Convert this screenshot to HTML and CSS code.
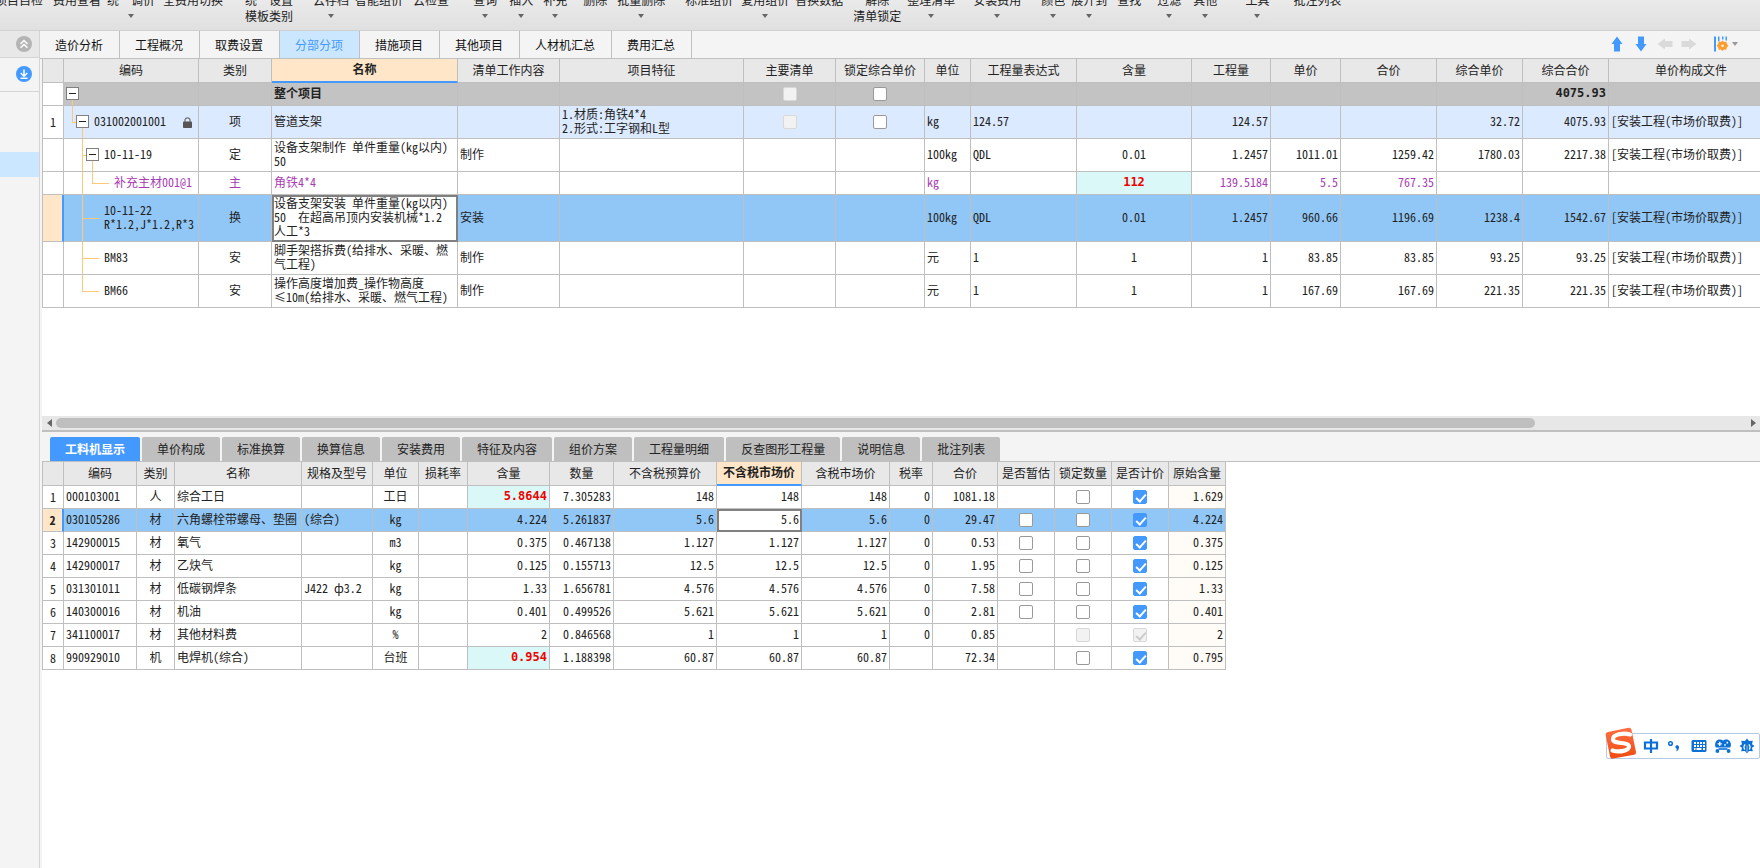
FILE: index.html
```html
<!DOCTYPE html>
<html lang="zh-CN">
<head>
<meta charset="utf-8">
<title>分部分项</title>
<link rel="stylesheet" href="styles.css">
</head>
<body>
<header class="ribbon">
  <button class="tool first">项目自检</button>
  <button class="tool g10">费用查看</button>
  <button class="tool g6">统一调价<i class="caret"></i></button>
  <button class="tool g8">全费用切换</button>
  <button class="tool g22">统一设置<span>模板类别</span></button>
  <button class="tool g20">云存档<i class="caret"></i></button>
  <button class="tool g6">智能组价</button>
  <button class="tool g10">云检查</button>
  <button class="tool g24">查询<i class="caret"></i></button>
  <button class="tool g12">插入<i class="caret"></i></button>
  <button class="tool g10">补充<i class="caret"></i></button>
  <button class="tool g16">删除</button>
  <button class="tool g10">批量删除<i class="caret"></i></button>
  <button class="tool g20">标准组价</button>
  <button class="tool g8">复用组价<i class="caret"></i></button>
  <button class="tool g6">替换数据</button>
  <button class="tool g10">解除<span>清单锁定</span></button>
  <button class="tool g6">整理清单<i class="caret"></i></button>
  <button class="tool g18">安装费用<i class="caret"></i></button>
  <button class="tool g20">颜色<i class="caret"></i></button>
  <button class="tool g6">展开到<i class="caret"></i></button>
  <button class="tool g10">查找</button>
  <button class="tool g16">过滤<i class="caret"></i></button>
  <button class="tool g12">其他<i class="caret"></i></button>
  <button class="tool g28">工具<i class="caret"></i></button>
  <button class="tool g24">批注列表</button>
</header>

<div class="workspace">
  <aside class="sidebar">
    <button class="side-top" aria-label="收起">
      <svg width="16" height="16" viewBox="0 0 16 16"><circle cx="8" cy="8" r="8" fill="#b4b4b4"/><path d="M4.5 8 8 4.6 11.5 8M4.5 11.8 8 8.4l3.5 3.4" fill="none" stroke="#fff" stroke-width="1.4"/></svg>
    </button>
    <button class="side-down" aria-label="下载">
      <svg width="16" height="16" viewBox="0 0 16 16"><circle cx="8" cy="8" r="8" fill="#4499ff"/><path d="M8 3.5v6M4.8 7 8 10.2 11.2 7M4.5 12.2h7" fill="none" stroke="#fff" stroke-width="1.5"/></svg>
    </button>
    <div class="side-selected"></div>
  </aside>

  <main class="main">
    <nav class="tabs">
      <button class="tab">造价分析</button>
      <button class="tab">工程概况</button>
      <button class="tab">取费设置</button>
      <button class="tab active">分部分项</button>
      <button class="tab">措施项目</button>
      <button class="tab">其他项目</button>
      <button class="tab">人材机汇总</button>
      <button class="tab">费用汇总</button>
      <div class="tab-tools">
        <button aria-label="上移"><svg width="16" height="16" viewBox="0 0 16 16"><path d="M8 .5 13.500 8H11v7.500H5V8H2.500z" fill="#4499ff"/></svg></button>
        <button aria-label="下移"><svg width="16" height="16" viewBox="0 0 16 16"><path d="M8 15.500 13.500 8H11V.5H5V8H2.500z" fill="#4499ff"/></svg></button>
        <button aria-label="左移"><svg width="16" height="16" viewBox="0 0 16 16"><path d="M.5 8 8 2.500V5h7.500v6H8v2.500z" fill="#dadada"/></svg></button>
        <button aria-label="右移"><svg width="16" height="16" viewBox="0 0 16 16"><path d="M15.500 8 8 2.500V5H.5v6H8v2.500z" fill="#dadada"/></svg></button>
        <button class="config" aria-label="列设置"><svg width="16" height="16" viewBox="0 0 16 16"><path d="M1 .5h2v15H1zM5 .5h1.500v5H5zM9 .5h1.500v3H9zM12.500.5H14v4h-1.500z" fill="#4499ff"/><path d="M9.500 4.500l1.600 1.400 2.200-.2.500 2.100 1.500 1.900-1.500 1.900-.5 2.100-2.200-.2-1.600 1.400-1.600-1.400-2.200.2-.5-2.100-1.500-1.900 1.500-1.900.5-2.100 2.200.2z" fill="#ff9d2b"/><circle cx="9.500" cy="9.700" r="1.300" fill="#f4f4f4"/></svg><i class="caret"></i></button>
      </div>
    </nav>

    <section class="upper">
      <table class="grid bill">
        <colgroup><col class="w21"><col class="w135"><col class="w73"><col class="w186"><col class="w102"><col class="w184"><col class="w92"><col class="w89"><col class="w46"><col class="w106"><col class="w115"><col class="w79"><col class="w70"><col class="w96"><col class="w86"><col class="w86"><col></colgroup>
        <thead><tr><th></th><th>编码</th><th>类别</th><th class="sorted">名称</th><th>清单工作内容</th><th>项目特征</th><th>主要清单</th><th>锁定综合单价</th><th>单位</th><th>工程量表达式</th><th>含量</th><th>工程量</th><th>单价</th><th>合价</th><th>综合单价</th><th>综合合价</th><th>单价构成文件</th></tr></thead>
        <tbody>
          <tr class="short total">
            <td class="num"></td>
            <td class="code"><button class="fold l0" aria-label="折叠"></button><i class="v l0 from"></i></td>
            <td></td><td class="strong">整个项目</td><td></td><td></td>
            <td class="check"><input type="checkbox" disabled aria-label="主要清单"></td>
            <td class="check"><input type="checkbox" aria-label="锁定综合单价"></td>
            <td></td><td></td><td></td><td></td><td></td><td></td><td></td><td class="r boldnum">4075.93</td><td></td>
          </tr>
          <tr class="tall item">
            <td class="num">1</td>
            <td class="code in1"><i class="v l0 to"></i><i class="h l0 tiny"></i><button class="fold l1" aria-label="折叠"></button><i class="v l1 from"></i>031002001001<svg class="lock" width="9" height="11" viewBox="0 0 9 11"><path d="M2 5V3.300a2.500 2.500 0 0 1 5 0V5" fill="none" stroke="#777" stroke-width="1.300"/><rect y="4.500" width="9" height="6.500" rx=".8" fill="#555"/></svg></td>
            <td class="c">项</td><td>管道支架</td><td></td><td>1.材质:角铁4*4<br>2.形式:工字钢和L型</td>
            <td class="check"><input type="checkbox" disabled aria-label="主要清单"></td>
            <td class="check"><input type="checkbox" aria-label="锁定综合单价"></td>
            <td>kg</td><td>124.57</td><td></td><td class="r">124.57</td><td></td><td></td><td class="r">32.72</td><td class="r">4075.93</td><td>[安装工程(市场价取费)]</td>
          </tr>
          <tr class="tall">
            <td class="num"></td>
            <td class="code in2"><i class="v l1"></i><i class="h l1 tiny"></i><button class="fold l2" aria-label="折叠"></button><i class="v l2 from"></i>10-11-19</td>
            <td class="c">定</td><td>设备支架制作 单件重量(kg以内)<br>50</td><td>制作</td><td></td><td></td><td></td>
            <td>100kg</td><td>QDL</td><td class="c">0.01</td><td class="r">1.2457</td><td class="r">1011.01</td><td class="r">1259.42</td><td class="r">1780.03</td><td class="r">2217.38</td><td>[安装工程(市场价取费)]</td>
          </tr>
          <tr class="short material">
            <td class="num"></td>
            <td class="code in3"><i class="v l1"></i><i class="v l2 to"></i><i class="h l2"></i>补充主材001@1</td>
            <td class="c">主</td><td>角铁4*4</td><td></td><td></td><td></td><td></td>
            <td>kg</td><td></td><td class="c boldnum changed">112</td><td class="r">139.5184</td><td class="r">5.5</td><td class="r">767.35</td><td></td><td></td><td></td>
          </tr>
          <tr class="triple selected">
            <td class="num"></td>
            <td class="code in2"><i class="v l1"></i><i class="h l1"></i>10-11-22<br>R*1.2,J*1.2,R*3</td>
            <td class="c">换</td><td class="focus">设备支架安装 单件重量(kg以内)<br>50&nbsp; 在超高吊顶内安装机械*1.2<br>人工*3</td><td>安装</td><td></td><td></td><td></td>
            <td>100kg</td><td>QDL</td><td class="c">0.01</td><td class="r">1.2457</td><td class="r">960.66</td><td class="r">1196.69</td><td class="r">1238.4</td><td class="r">1542.67</td><td>[安装工程(市场价取费)]</td>
          </tr>
          <tr class="tall">
            <td class="num"></td>
            <td class="code in2"><i class="v l1"></i><i class="h l1"></i>BM83</td>
            <td class="c">安</td><td>脚手架搭拆费(给排水、采暖、燃<br>气工程)</td><td>制作</td><td></td><td></td><td></td>
            <td>元</td><td>1</td><td class="c">1</td><td class="r">1</td><td class="r">83.85</td><td class="r">83.85</td><td class="r">93.25</td><td class="r">93.25</td><td>[安装工程(市场价取费)]</td>
          </tr>
          <tr class="tall">
            <td class="num"></td>
            <td class="code in2"><i class="v l1 to"></i><i class="h l1"></i>BM66</td>
            <td class="c">安</td><td>操作高度增加费_操作物高度<br>≤10m(给排水、采暖、燃气工程)</td><td>制作</td><td></td><td></td><td></td>
            <td>元</td><td>1</td><td class="c">1</td><td class="r">1</td><td class="r">167.69</td><td class="r">167.69</td><td class="r">221.35</td><td class="r">221.35</td><td>[安装工程(市场价取费)]</td>
          </tr>
        </tbody>
      </table>
    </section>

    <div class="hscroll">
      <button aria-label="向左滚动"><svg width="5" height="8" viewBox="0 0 5 8"><path d="M5 0v8L0 4z" fill="#666"/></svg></button>
      <div class="track"><div class="thumb"></div></div>
      <button aria-label="向右滚动"><svg width="5" height="8" viewBox="0 0 5 8"><path d="M0 0v8l5-4z" fill="#666"/></svg></button>
    </div>

    <section class="lower">
      <nav class="subtabs">
        <button class="subtab active">工料机显示</button>
        <button class="subtab">单价构成</button>
        <button class="subtab">标准换算</button>
        <button class="subtab">换算信息</button>
        <button class="subtab">安装费用</button>
        <button class="subtab">特征及内容</button>
        <button class="subtab">组价方案</button>
        <button class="subtab">工程量明细</button>
        <button class="subtab">反查图形工程量</button>
        <button class="subtab">说明信息</button>
        <button class="subtab">批注列表</button>
      </nav>
      <table class="grid detail">
        <colgroup><col class="w21"><col class="w73"><col class="w38"><col class="w127"><col class="w71"><col class="w46"><col class="w49"><col class="w82"><col class="w64"><col class="w103"><col class="w85"><col class="w88"><col class="w43"><col class="w65"><col class="w57"><col class="w57"><col class="w57"><col class="w57"></colgroup>
        <thead><tr><th></th><th>编码</th><th>类别</th><th>名称</th><th>规格及型号</th><th>单位</th><th>损耗率</th><th>含量</th><th>数量</th><th>不含税预算价</th><th class="sorted">不含税市场价</th><th>含税市场价</th><th>税率</th><th>合价</th><th>是否暂估</th><th>锁定数量</th><th>是否计价</th><th>原始含量</th></tr></thead>
        <tbody>
          <tr class="short"><td class="num">1</td><td>000103001</td><td class="c">人</td><td>综合工日</td><td></td><td class="c">工日</td><td></td><td class="r boldnum changed">5.8644</td><td class="r">7.305283</td><td class="r">148</td><td class="r">148</td><td class="r">148</td><td class="r">0</td><td class="r">1081.18</td><td></td><td class="check"><input type="checkbox" aria-label="锁定数量"></td><td class="check"><input type="checkbox" checked aria-label="是否计价"></td><td class="r origin">1.629</td></tr>
          <tr class="short selected"><td class="num">2</td><td>030105286</td><td class="c">材</td><td>六角螺栓带螺母、垫圈</td><td>(综合)</td><td class="c">kg</td><td></td><td class="r">4.224</td><td class="r">5.261837</td><td class="r">5.6</td><td class="r focus">5.6</td><td class="r">5.6</td><td class="r">0</td><td class="r">29.47</td><td class="check"><input type="checkbox" aria-label="是否暂估"></td><td class="check"><input type="checkbox" aria-label="锁定数量"></td><td class="check"><input type="checkbox" checked aria-label="是否计价"></td><td class="r origin">4.224</td></tr>
          <tr class="short"><td class="num">3</td><td>142900015</td><td class="c">材</td><td>氧气</td><td></td><td class="c">m3</td><td></td><td class="r">0.375</td><td class="r">0.467138</td><td class="r">1.127</td><td class="r">1.127</td><td class="r">1.127</td><td class="r">0</td><td class="r">0.53</td><td class="check"><input type="checkbox" aria-label="是否暂估"></td><td class="check"><input type="checkbox" aria-label="锁定数量"></td><td class="check"><input type="checkbox" checked aria-label="是否计价"></td><td class="r origin">0.375</td></tr>
          <tr class="short"><td class="num">4</td><td>142900017</td><td class="c">材</td><td>乙炔气</td><td></td><td class="c">kg</td><td></td><td class="r">0.125</td><td class="r">0.155713</td><td class="r">12.5</td><td class="r">12.5</td><td class="r">12.5</td><td class="r">0</td><td class="r">1.95</td><td class="check"><input type="checkbox" aria-label="是否暂估"></td><td class="check"><input type="checkbox" aria-label="锁定数量"></td><td class="check"><input type="checkbox" checked aria-label="是否计价"></td><td class="r origin">0.125</td></tr>
          <tr class="short"><td class="num">5</td><td>031301011</td><td class="c">材</td><td>低碳钢焊条</td><td>J422 ф3.2</td><td class="c">kg</td><td></td><td class="r">1.33</td><td class="r">1.656781</td><td class="r">4.576</td><td class="r">4.576</td><td class="r">4.576</td><td class="r">0</td><td class="r">7.58</td><td class="check"><input type="checkbox" aria-label="是否暂估"></td><td class="check"><input type="checkbox" aria-label="锁定数量"></td><td class="check"><input type="checkbox" checked aria-label="是否计价"></td><td class="r origin">1.33</td></tr>
          <tr class="short"><td class="num">6</td><td>140300016</td><td class="c">材</td><td>机油</td><td></td><td class="c">kg</td><td></td><td class="r">0.401</td><td class="r">0.499526</td><td class="r">5.621</td><td class="r">5.621</td><td class="r">5.621</td><td class="r">0</td><td class="r">2.81</td><td class="check"><input type="checkbox" aria-label="是否暂估"></td><td class="check"><input type="checkbox" aria-label="锁定数量"></td><td class="check"><input type="checkbox" checked aria-label="是否计价"></td><td class="r origin">0.401</td></tr>
          <tr class="short"><td class="num">7</td><td>341100017</td><td class="c">材</td><td>其他材料费</td><td></td><td class="c">%</td><td></td><td class="r">2</td><td class="r">0.846568</td><td class="r">1</td><td class="r">1</td><td class="r">1</td><td class="r">0</td><td class="r">0.85</td><td></td><td class="check"><input type="checkbox" disabled aria-label="锁定数量"></td><td class="check"><input type="checkbox" checked disabled aria-label="是否计价"></td><td class="r origin">2</td></tr>
          <tr class="short"><td class="num">8</td><td>990929010</td><td class="c">机</td><td>电焊机(综合)</td><td></td><td class="c">台班</td><td></td><td class="r boldnum changed">0.954</td><td class="r">1.188398</td><td class="r">60.87</td><td class="r">60.87</td><td class="r">60.87</td><td></td><td class="r">72.34</td><td></td><td class="check"><input type="checkbox" aria-label="锁定数量"></td><td class="check"><input type="checkbox" checked aria-label="是否计价"></td><td class="r origin">0.795</td></tr>
        </tbody>
      </table>
    </section>
  </main>
</div>

<div class="ime">
  <svg class="ime-logo" width="32" height="32" viewBox="0 0 32 32"><defs><linearGradient id="ime-bg" x1="0" y1="0" x2="0" y2="1"><stop offset="0" stop-color="#ff7043"/><stop offset="1" stop-color="#f04a10"/></linearGradient></defs><path d="M3 5 23.500.700q2.300-.4 2.900 1.800L31 25q.3 2.300-1.800 2.800L8 31.600q-2.300.4-2.900-1.800L.7 8Q.4 5.600 3 5z" fill="url(#ime-bg)"/><path d="M25 7.500C19 5.500 7.500 7 8 12.500c.4 5 15.500 2 16 6.800.4 4.600-9.500 6.300-16.500 4.200" fill="none" stroke="#fff" stroke-width="4.200" stroke-linecap="round"/></svg>
  <button aria-label="中文"><svg width="16" height="16" viewBox="0 0 16 16"><path d="M2 4.500h12v6H2zM8 1v14" fill="none" stroke="#0a70d8" stroke-width="2.200"/></svg></button>
  <button aria-label="标点"><svg width="16" height="16" viewBox="0 0 16 16"><circle cx="3.500" cy="5.500" r="1.800" fill="none" stroke="#0a70d8" stroke-width="1.500"/><path d="M9.300 13.500c3.200-1.500 3.500-5.500 1.400-6.200-2.200-.6-3.300 2.400-1 3.200-.1 1.200-.2 1.900-.4 3z" fill="#0a70d8"/></svg></button>
  <button aria-label="键盘"><svg width="16" height="16" viewBox="0 0 16 16"><path fill-rule="evenodd" d="M1.500 2h13l1 1v10l-1 1h-13l-1-1V3zM3 4v2h2V4zM6 4v2h2V4zM9 4v2h2V4zM12 4v2h2V4zM3 7v2h2V7zM6 7v2h2V7zM9 7v2h2V7zM12 7v2h2V7zM3 10v2h1.500v-2zM5.500 10v2h5v-2zM12 10v2h2v-2z" fill="#0a70d8"/></svg></button>
  <button aria-label="游戏"><svg width="16" height="16" viewBox="0 0 16 16"><path fill-rule="evenodd" d="M3.500 1.500h2.700l.8.800h2l.8-.8h2.700q2.500.5 3.200 3.500.7 3.500-.7 4.500H1Q-.400 8.500.3 5 1 2 3.500 1.500zM4 3.800v1.400H2.600v1.400H4V8h1.400V6.600h1.400V5.200H5.400V3.800zM9.200 6.200v1.600h1.600V6.200zM11.500 3.800v1.600h1.600V3.800z" fill="#0a70d8"/><path d="M3.500 11h9" stroke="#0a70d8" stroke-width="1.600"/><circle cx="2.400" cy="13" r="1.900" fill="#0a70d8"/><circle cx="13.600" cy="13" r="1.900" fill="#0a70d8"/></svg></button>
  <button aria-label="工具"><svg width="16" height="16" viewBox="0 0 16 16"><path d="M8 .5 10 3l3.800-.3-.8 3.600L15.500 8 13 9.700l.8 3.600L10 13l-2 2.500L6 13l-3.800.3.800-3.600L.5 8 3 6.300l-.8-3.600L6 3z" fill="#0a70d8"/><path d="M5.700 11.500q-1.700-3 .5-5.200M10.300 11.500q1.700-3-.5-5.200" fill="none" stroke="#fff" stroke-width="1.200"/><path d="M8 7.500v7" stroke="#fff" stroke-width=".6"/></svg></button>
</div>
</body>
</html>
```

FILE: styles.css
```css
* { box-sizing: border-box; }

body {
  margin: 0;
  height: 100vh;
  display: flex;
  flex-direction: column;
  overflow: hidden;
  background: #fff;
  color: #222;
  font: 12px/14px "Noto Sans CJK SC", sans-serif;
}

button {
  border: 0;
  padding: 0;
  background: none;
  color: inherit;
  font: inherit;
  white-space: nowrap;
}

svg { display: block; }

.caret {
  display: block;
  margin: 6px auto 0;
  width: 0;
  border: 3px solid transparent;
  border-top: 4px solid #666;
  border-bottom: 0;
}

/* ribbon */
.ribbon {
  flex: none;
  display: flex;
  align-items: flex-start;
  height: 31px;
  overflow: hidden;
  background: linear-gradient(#eaeaea, #e0e0e0);
  border-bottom: 1px solid #d0d0d0;
}
.tool { flex: none; margin-top: -8px; line-height: 16px; }
.tool span { display: block; }
.first { margin-left: -5px; }
.g6 { margin-left: 6px; }
.g8 { margin-left: 8px; }
.g10 { margin-left: 10px; }
.g12 { margin-left: 12px; }
.g16 { margin-left: 16px; }
.g18 { margin-left: 18px; }
.g20 { margin-left: 20px; }
.g22 { margin-left: 22px; }
.g24 { margin-left: 24px; }
.g28 { margin-left: 28px; }

.workspace { flex: 1; display: flex; min-height: 0; background: #f4f4f4; }

/* sidebar */
.sidebar { flex: none; width: 40px; border-right: 1px solid #d4d4d4; }
.sidebar button { display: flex; align-items: center; justify-content: flex-end; width: 100%; padding-right: 7px; }
.side-top { height: 27px; background: #e8e8e8; border-bottom: 1px solid #d4d4d4; }
.side-down { height: 34px; padding-bottom: 2px; border-bottom: 1px solid #d4d4d4; }
.side-selected { height: 25px; margin-top: 60px; background: #cbe7ff; }

.main { flex: 1; display: flex; flex-direction: column; min-width: 0; }

/* main tabs */
.tabs { flex: none; display: flex; height: 28px; border-bottom: 1px solid #c0c0c0; }
.tab { padding: 0 16px 0 15px; border-right: 1px solid #c0c0c0; color: #111; }
.tab.active { background: #cbe7ff; color: #4499ff; }
.tab-tools { display: flex; align-items: center; gap: 8px; margin-left: auto; padding: 0 22px 2px 0; }
.tab-tools .config { display: flex; align-items: center; gap: 3px; margin-left: 8px; }
.config .caret { margin: 0; border-top-color: #999; }

/* panes */
.upper { flex: 357 1 0; min-height: 0; overflow: hidden; margin-left: 2px; background: #fff; }
.lower { flex: 436 1 0; min-height: 0; overflow: hidden; margin-left: 2px; background: #fff; }

/* grids */
.grid { table-layout: fixed; border-spacing: 0; border-left: 1px solid #bfbfbf; font-feature-settings: "hwid" 1; }
.bill { width: calc(100% + 14px); }
.detail { width: 0; }
.grid th, .grid td {
  padding: 0 2px 2px;
  border-right: 1px solid #bfbfbf;
  border-bottom: 1px solid #bfbfbf;
  white-space: nowrap;
  overflow: hidden;
  text-align: left;
}
.grid th { height: 24px; padding: 0 0 2px; background: #e8e8e8; font-weight: 400; text-align: center; }
.grid th.sorted { background: #ffe6c8; border-bottom: 2px solid #4499ff; font-weight: 700; }
.grid .c { text-align: center; }
.grid .r { text-align: right; }
.grid .num { padding: 0; text-align: center; background: #fff; }
.grid .check { padding: 0; }
.short { height: 23px; }
.tall { height: 33px; }
.triple { height: 47px; }

.total { background: #c3c3c3; }
.item { background: #dceaff; }
.material { color: #a83cb4; }
.selected { background: #91c7f7; }
.strong { font-weight: 700; }
.boldnum { font-family: "DejaVu Sans Mono", monospace; font-weight: 700; }
.changed { background: #daf8f8; color: #f00000; }
.origin { background: #fffbf6; }
.selected .origin { background: #91c7f7; }
.grid .selected .num { background: #ffe6c8; border-right: 2px solid #4499ff; font-weight: 700; }
.grid .focus {
  background: #fff;
  border-color: #808080;
  box-shadow: inset 2px 2px 0 #808080, inset -1px -1px 0 #808080;
}

.w21 { width: 21px; }
.w38 { width: 38px; }
.w43 { width: 43px; }
.w46 { width: 46px; }
.w49 { width: 49px; }
.w57 { width: 57px; }
.w64 { width: 64px; }
.w65 { width: 65px; }
.w70 { width: 70px; }
.w71 { width: 71px; }
.w73 { width: 73px; }
.w79 { width: 79px; }
.w82 { width: 82px; }
.w85 { width: 85px; }
.w86 { width: 86px; }
.w88 { width: 88px; }
.w89 { width: 89px; }
.w92 { width: 92px; }
.w96 { width: 96px; }
.w102 { width: 102px; }
.w103 { width: 103px; }
.w106 { width: 106px; }
.w115 { width: 115px; }
.w127 { width: 127px; }
.w135 { width: 135px; }
.w184 { width: 184px; }
.w186 { width: 186px; }

/* tree lines and fold boxes, ten pixels per level */
.code { position: relative; }
.l0 { --x: 2px; }
.l1 { --x: 12px; }
.l2 { --x: 22px; }
.grid .in1 { padding-left: 30px; }
.grid .in2 { padding-left: 40px; }
.grid .in3 { padding-left: 50px; }
.v { position: absolute; left: calc(var(--x) + 6px); top: 0; bottom: -1px; width: 1px; background: #ffc878; }
.v.from { top: 50%; }
.v.to { bottom: 50%; }
.h { position: absolute; left: calc(var(--x) + 6px); top: 50%; width: 17px; height: 1px; background: #ffc878; }
.h.tiny { width: 5px; }
.fold {
  position: absolute;
  z-index: 1;
  left: var(--x);
  top: calc(50% - 7px);
  width: 13px;
  height: 13px;
  border: 1px solid #808080;
  background: linear-gradient(#222, #222) center / 7px 1px no-repeat #fff;
}
.lock { display: inline-block; margin-left: 17px; vertical-align: -2px; }

input[type="checkbox"] {
  appearance: none;
  display: block;
  position: relative;
  width: 14px;
  height: 14px;
  margin: 0 auto;
  border: 1px solid #999;
  border-radius: 2px;
  background: #fff;
}
input[type="checkbox"]:disabled { border-color: #d8d8d8; background: #f2f2f2; }
input[type="checkbox"]:checked:enabled { border-color: #4499ff; background: #4499ff; }
input[type="checkbox"]:checked::after {
  content: "";
  position: absolute;
  left: 4px;
  top: 1px;
  width: 4px;
  height: 8px;
  border: solid #fff;
  border-width: 0 2px 2px 0;
  transform: rotate(42deg);
}
input[type="checkbox"]:checked:disabled::after { border-color: #ccc; }

/* horizontal scrollbar */
.hscroll { flex: none; display: flex; height: 16px; margin-left: 2px; background: #e7e7e7; border-bottom: 2px solid #bfbfbf; }
.hscroll button { display: flex; align-items: center; justify-content: center; width: 14px; }
.track { flex: 1; padding: 2px 0; }
.thumb { width: calc(100% * 7 / 8); height: 10px; border-radius: 5px; background: #bfbfbf; }

/* lower tabs */
.subtabs { display: flex; gap: 2px; padding: 5px 0 0 8px; background: #f4f4f4; border-bottom: 1px solid #bfbfbf; }
.subtab { height: 24px; padding: 0 15px; border-radius: 2px 2px 0 0; background: #bfbfbf; }
.subtab.active { background: #4499ff; color: #fff; font-weight: 700; }

/* input method bar */
.ime {
  position: absolute;
  right: 0;
  bottom: 109px;
  display: flex;
  align-items: center;
  gap: 8px;
  height: 26px;
  padding: 0 4px 0 36px;
  border: 1px solid #b8cbe6;
  border-radius: 2px;
  background: #fff;
}
.ime-logo { position: absolute; left: -2px; bottom: -1px; }
```
